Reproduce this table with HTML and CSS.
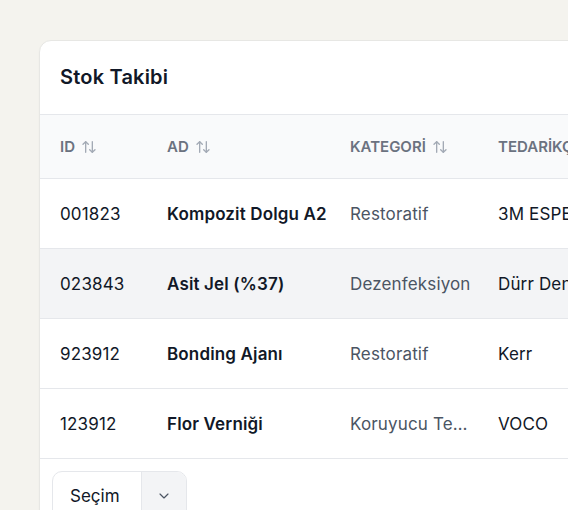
FILE: index.html
```html
<!DOCTYPE html>
<html lang="tr">
<head>
<meta charset="utf-8">
<link rel="stylesheet" href="styles.css">
</head>
<body>
<div class="card">
  <div class="card-head"><h2 class="title">Stok Takibi</h2></div>
  <table class="tbl">
    <colgroup>
      <col class="c-id"><col class="c-ad"><col class="c-kat"><col class="c-ted">
    </colgroup>
    <thead>
      <tr>
        <th><span class="th-in">ID <svg class="sort" viewBox="0 0 24 24"><path d="m21 16-4 4-4-4"/><path d="M17 20V4"/><path d="m3 8 4-4 4 4"/><path d="M7 4v16"/></svg></span></th>
        <th><span class="th-in">AD <svg class="sort" viewBox="0 0 24 24"><path d="m21 16-4 4-4-4"/><path d="M17 20V4"/><path d="m3 8 4-4 4 4"/><path d="M7 4v16"/></svg></span></th>
        <th><span class="th-in">KATEGORİ <svg class="sort" viewBox="0 0 24 24"><path d="m21 16-4 4-4-4"/><path d="M17 20V4"/><path d="m3 8 4-4 4 4"/><path d="M7 4v16"/></svg></span></th>
        <th><span class="th-in">TEDARİKÇİ <svg class="sort" viewBox="0 0 24 24"><path d="m21 16-4 4-4-4"/><path d="M17 20V4"/><path d="m3 8 4-4 4 4"/><path d="M7 4v16"/></svg></span></th>
      </tr>
    </thead>
    <tbody>
      <tr><td>001823</td><td class="name">Kompozit Dolgu A2</td><td class="cat"><span class="trunc">Restoratif</span></td><td>3M ESPE</td></tr>
      <tr class="hl"><td>023843</td><td class="name">Asit Jel (%37)</td><td class="cat"><span class="trunc">Dezenfeksiyon</span></td><td>Dürr Dental</td></tr>
      <tr><td>923912</td><td class="name">Bonding Ajanı</td><td class="cat"><span class="trunc">Restoratif</span></td><td>Kerr</td></tr>
      <tr><td>123912</td><td class="name">Flor Verniği</td><td class="cat"><span class="trunc">Koruyucu Temizleyici</span></td><td>VOCO</td></tr>
    </tbody>
  </table>
  <div class="card-foot">
    <div class="select">
      <span class="select-label">Seçim</span>
      <span class="select-btn"><svg viewBox="0 0 24 24"><path d="m6 9 6 6 6-6"/></svg></span>
    </div>
  </div>
</div>
</body>
</html>
```
FILE: styles.css
```css
html, body {
  margin: 0;
  padding: 0;
  background: #f4f3ee;
  overflow: hidden;
}
body {
  padding: 40px 0 0 40px;
  font-family: Inter, "Noto Sans", sans-serif;
  color: #111827;
  width: 800px;
}
.card {
  width: 720px;
  background: #fff;
  border: 1px solid #e7e7e4;
  border-radius: 12px;
  box-sizing: border-box;
  box-shadow: 0 1px 2px rgba(0,0,0,0.03);
  overflow: hidden;
  margin-left: -1px;
}
.card-head {
  height: 73px;
  display: flex;
  align-items: center;
  padding-left: 20px;
  border-bottom: 1px solid #e5e7eb;
}
.title {
  margin: 0;
  font-size: 20px;
  font-weight: 600;
  color: #111827;
  letter-spacing: 0.2px;
  padding-bottom: 2px;
}
.tbl {
  border-collapse: collapse;
  table-layout: fixed;
  width: 720px;
}
.c-id { width: 107px; }
.c-ad { width: 183px; }
.c-kat { width: 148px; }
.c-ted { width: 282px; }
.tbl th {
  background: #f9fafb;
  height: 63px;
  padding: 0 0 0 20px;
  text-align: left;
  font-size: 15px;
  font-weight: 600;
  color: #6b7280;
  border-bottom: 1px solid #e5e7eb;
  white-space: nowrap;
}
.th-in {
  display: inline-flex;
  align-items: center;
  gap: 6px;
}
.sort {
  width: 16px;
  height: 16px;
  fill: none;
  stroke: #a3aab5;
  stroke-width: 2;
  stroke-linecap: round;
  stroke-linejoin: round;
}
.tbl td {
  height: 69px;
  padding: 0 0 0 20px;
  font-size: 17px;
  color: #111827;
  border-bottom: 1px solid #e5e7eb;
  white-space: nowrap;
  letter-spacing: 0.15px;
}
.tbl tr.hl td { background: #f3f4f6; }
.tbl td.name { font-weight: 600; }
.tbl td.cat { color: #4b5563; }
.trunc {
  display: block;
  max-width: 124px;
  overflow: hidden;
  text-overflow: ellipsis;
}
.card-foot {
  padding: 12px 12px 40px;
}
.select {
  display: inline-flex;
  height: 48px;
  border: 1px solid #e5e7eb;
  border-radius: 10px;
  overflow: hidden;
}
.select-label {
  display: flex;
  align-items: center;
  padding: 0 21px 0 17px;
  font-size: 17px;
  color: #111827;
}
.select-btn {
  display: flex;
  align-items: center;
  justify-content: center;
  width: 44px;
  background: #f3f4f6;
  border-left: 1px solid #e5e7eb;
}
.select-btn svg {
  width: 16px;
  height: 16px;
  fill: none;
  stroke: #4b5563;
  stroke-width: 1.75;
  stroke-linecap: round;
  stroke-linejoin: round;
}
```
